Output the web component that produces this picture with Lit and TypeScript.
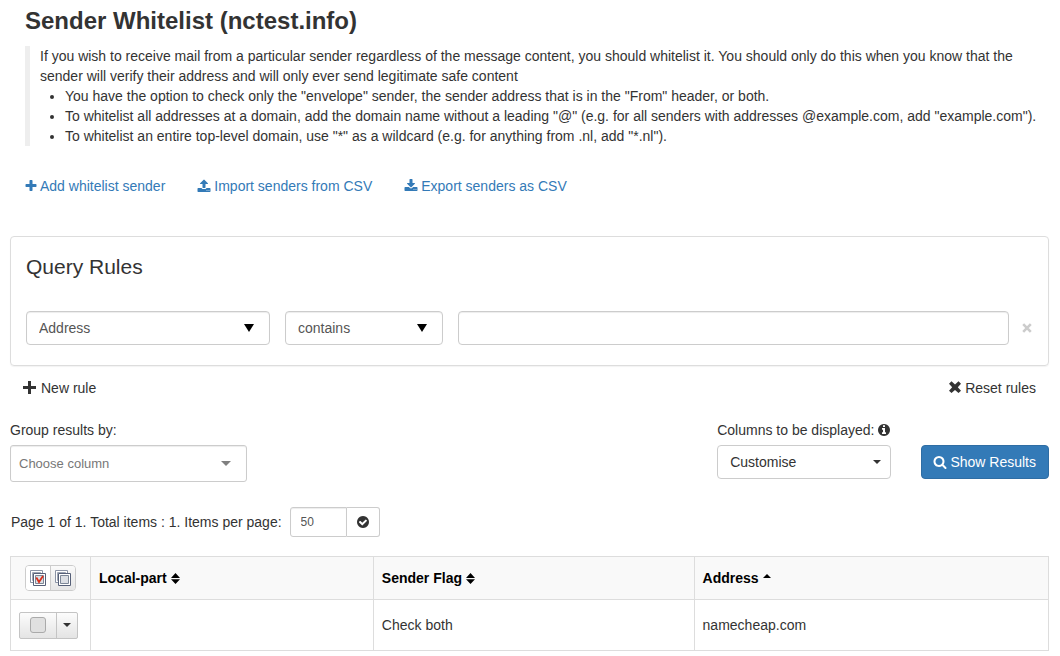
import { LitElement, html, svg, css } from "lit";
import { customElement, state } from "lit/decorators.js";

const ICONS = {
  plus: "M1600 736v192q0 40-28 68t-68 28h-416v416q0 40-28 68t-68 28h-192q-40 0-68-28t-28-68v-416h-416q-40 0-68-28t-28-68v-192q0-40 28-68t68-28h416v-416q0-40 28-68t68-28h192q40 0 68 28t28 68v416h416q40 0 68 28t28 68z",
  upload:
    "M1344 1472q0-26-19-45t-45-19-45 19-19 45 19 45 45 19 45-19 19-45zm256 0q0-26-19-45t-45-19-45 19-19 45 19 45 45 19 45-19 19-45zm128-224v320q0 40-28 68t-68 28h-1472q-40 0-68-28t-28-68v-320q0-40 28-68t68-28h427q21 56 70.5 92t110.5 36h256q61 0 110.5-36t70.5-92h427q40 0 68 28t28 68zm-325-648q-17 40-59 40h-256v448q0 26-19 45t-45 19h-256q-26 0-45-19t-19-45v-448h-256q-42 0-59-40-17-39 14-69l448-448q18-19 45-19t45 19l448 448q31 30 14 69z",
  download:
    "M1344 1344q0-26-19-45t-45-19-45 19-19 45 19 45 45 19 45-19 19-45zm256 0q0-26-19-45t-45-19-45 19-19 45 19 45 45 19 45-19 19-45zm128-224v320q0 40-28 68t-68 28h-1472q-40 0-68-28t-28-68v-320q0-40 28-68t68-28h465l135 136q58 56 136 56t136-56l136-136h464q40 0 68 28t28 68zm-325-569q17 41-14 70l-448 448q-18 19-45 19t-45-19l-448-448q-31-29-14-70 17-39 59-39h256v-448q0-26 19-45t45-19h256q26 0 45 19t19 45v448h256q42 0 59 39z",
  search:
    "M1216 832q0-185-131.5-316.5t-316.5-131.5-316.5 131.5-131.5 316.5 131.5 316.5 316.5 131.5 316.5-131.5 131.5-316.5zm512 832q0 52-38 90t-90 38q-54 0-90-38l-343-342q-179 124-399 124-143 0-273.5-55.5t-225-150-150-225-55.5-273.5 55.5-273.5 150-225 225-150 273.5-55.5 273.5 55.5 225 150 150 225 55.5 273.5q0 220-124 399l343 343q37 37 37 90z",
  info: "M1152 1376v-160q0-14-9-23t-23-9h-96v-512q0-14-9-23t-23-9h-320q-14 0-23 9t-9 23v160q0 14 9 23t23 9h96v320h-96q-14 0-23 9t-9 23v160q0 14 9 23t23 9h448q14 0 23-9t9-23zm-128-896v-160q0-14-9-23t-23-9h-192q-14 0-23 9t-9 23v160q0 14 9 23t23 9h192q14 0 23-9t9-23zm640 416q0 209-103 385.5t-279.5 279.5-385.5 103-385.5-103-279.5-279.5-103-385.5 103-385.5 279.5-279.5 385.5-103 385.5 103 279.5 279.5 103 385.5z",
  check:
    "M1412 734q0-28-18-46l-91-90q-19-19-45-19t-45 19l-408 407-226-226q-19-19-45-19t-45 19l-91 90q-18 18-18 46 0 27 18 45l362 362q19 19 45 19 27 0 46-19l543-543q18-18 18-45zm252 162q0 209-103 385.5t-279.5 279.5-385.5 103-385.5-103-279.5-279.5-103-385.5 103-385.5 279.5-279.5 385.5-103 385.5 103 279.5 279.5 103 385.5z",
};

type IconName = keyof typeof ICONS;

const icon = (name: IconName) => html`
  <svg class="icon" viewBox="0 0 1792 1792" aria-hidden="true"><path d=${ICONS[name]}></path></svg>
`;

const boldPlus = html`
  <svg class="glyph" viewBox="0 0 13 14" aria-hidden="true"><path d="M5 0h3v5h5v3H8v5H5V8H0V5h5z"></path></svg>
`;

const boldCross = html`
  <svg class="glyph" viewBox="0 0 13 14" aria-hidden="true">
    <path d="M3.500 .3l3.500 3.200L10.500 .3 13 2.700 9.800 6.200 13 9.700l-2.500 2.400L7 8.900l-3.500 3.200L1 9.700l3.200-3.500L1 2.700z"></path>
  </svg>
`;

const cross = html`
  <svg class="cross" viewBox="0 0 12 12" aria-hidden="true">
    <path d="M2.200 2.200l7.600 7.600M9.800 2.200L2.200 9.800"></path>
  </svg>
`;

const sortBoth = html`
  <svg class="sort-both" viewBox="0 0 9 11" aria-hidden="true"><path d="M4.500 0L9 5H0zM0 6.200h9l-4.500 4.800z"></path></svg>
`;

const sortUp = html`
  <svg class="sort-up" viewBox="0 0 8 4" aria-hidden="true"><path d="M0 4L4 0l4 4z"></path></svg>
`;

const arrow = (kind: string) => html`
  <svg class="arrow ${kind}" viewBox="0 0 10 8" preserveAspectRatio="none" aria-hidden="true">
    <path d="M0 0h10L5 8z"></path>
  </svg>
`;

const stack = (checked: boolean) => html`
  <svg class="stack" viewBox="0 0 16 16" aria-hidden="true">
    <path d="M.5 .5h12v12H.5z" fill="#fff" stroke="#8a93a5"></path>
    <path d="M2.500 2.500h8v8h-8z" fill="#d5d8de" stroke="#a0a7b5"></path>
    <path d="M3.500 3.500h12v12h-12z" fill="#fff" stroke="#566078"></path>
    <path d="M5.500 5.500h8v8h-8z" fill="#dcdfe4" stroke="#7d8797"></path>
    ${checked
      ? svg`<path d="M6.300 7.500l2.700 4.500 4-6" fill="none" stroke="#d9301c" stroke-width="1.800"></path>`
      : null}
  </svg>
`;

@customElement("app-root")
export class AppRoot extends LitElement {
  @state() private rows = [{ local: "", flag: "Check both", address: "namecheap.com" }];

  static styles = css`
    :host {
      display: block;
      padding: 7px 11px 5px 10px;
      background: #fff;
      color: #333;
      font: 14px/20px "Liberation Sans", Arial, sans-serif;
    }
    * {
      box-sizing: border-box;
    }
    button,
    input,
    select {
      margin: 0;
      font: inherit;
      color: inherit;
    }
    button {
      padding: 0;
      border: 0;
      background: none;
      cursor: pointer;
    }
    svg {
      flex: none;
      display: block;
    }
    .icon {
      width: 14px;
      height: 14px;
      fill: currentColor;
    }
    .glyph {
      width: 13px;
      height: 14px;
      fill: currentColor;
    }
    .cross {
      width: 12px;
      height: 12px;
      stroke: currentColor;
      stroke-width: 2.6;
    }
    .intro {
      padding: 0 0 0 15px;
    }
    h1 {
      margin: 0 0 11px;
      font-size: 24px;
      line-height: 28px;
    }
    .note {
      margin: 0;
      padding-left: 10px;
      border-left: 5px solid #eee;
    }
    .note p {
      margin: 0;
    }
    .note ul {
      margin: 0;
      padding-left: 25px;
    }
    .links {
      display: flex;
      gap: 32px;
      margin: 30px 0 40px;
    }
    .links a {
      display: flex;
      align-items: center;
      gap: 3px;
      color: #337ab7;
      text-decoration: none;
    }
    .links a.add {
      gap: 4px;
    }
    .narrow {
      width: 11px;
      display: flex;
      justify-content: center;
    }
    .card {
      padding: 18px 15px 20px;
      border: 1px solid #ddd;
      border-radius: 4px;
      box-shadow: 0 1px 1px rgba(0, 0, 0, 0.05);
    }
    h2 {
      margin: 0 0 32px;
      font-size: 21px;
      line-height: 24px;
      font-weight: 400;
    }
    .rule {
      display: flex;
      align-items: center;
      gap: 12px;
    }
    .fields {
      flex: 1;
      display: grid;
      grid-template-columns: 244px 158px 1fr;
      gap: 15px;
    }
    .picker {
      display: grid;
      align-items: center;
    }
    .picker > * {
      grid-area: 1 / 1;
    }
    .control {
      appearance: none;
      width: 100%;
      height: 34px;
      padding: 0 12px;
      border: 1px solid #ccc;
      border-radius: 4px;
      background: #fff;
      color: #555;
      box-shadow: inset 0 1px 1px rgba(0, 0, 0, 0.075);
    }
    .arrow {
      justify-self: end;
      pointer-events: none;
    }
    .arrow.solid {
      width: 10px;
      height: 8px;
      margin-right: 16px;
      fill: #000;
    }
    .arrow.wide {
      width: 10px;
      height: 5px;
      margin-right: 16px;
      fill: #808080;
    }
    .arrow.caret {
      width: 8px;
      height: 4px;
      margin-right: 10px;
      fill: #333;
    }
    .remove {
      color: #ccc;
    }
    .rule-actions {
      display: flex;
      justify-content: space-between;
      padding: 12px 13px 22px;
    }
    .rule-actions button {
      display: flex;
      align-items: center;
      gap: 5px;
    }
    .rule-actions .reset {
      gap: 4px;
    }
    .options {
      display: flex;
      align-items: flex-start;
      justify-content: space-between;
    }
    .options label {
      display: flex;
      align-items: center;
      gap: 3px;
      margin-bottom: 5px;
    }
    .group {
      width: 237px;
    }
    .group .control {
      height: 37px;
      padding: 0 8px;
      border-radius: 3px;
      font-size: 13px;
      color: #777;
    }
    .right {
      display: flex;
      align-items: flex-end;
      gap: 30px;
    }
    .columns .control {
      color: #333;
      box-shadow: none;
    }
    .primary {
      display: flex;
      align-items: center;
      gap: 3px;
      height: 34px;
      padding: 0 12px 0 11px;
      border: 1px solid #2e6da4;
      border-radius: 4px;
      background: #337ab7;
      color: #fff;
    }
    .paging {
      display: flex;
      align-items: center;
      margin: 25px 0 19px;
      padding-left: 1px;
      gap: 8px;
    }
    .per-page {
      display: flex;
    }
    .per-page input {
      width: 57px;
      height: 30px;
      padding: 0 10px;
      border: 1px solid #ccc;
      border-radius: 3px 0 0 3px;
      font-size: 12px;
      color: #555;
      box-shadow: inset 0 1px 1px rgba(0, 0, 0, 0.075);
    }
    .per-page button {
      display: flex;
      align-items: center;
      justify-content: center;
      width: 33px;
      border: 1px solid #ccc;
      border-left: 0;
      border-radius: 0 3px 3px 0;
    }
    table {
      width: 100%;
      table-layout: fixed;
      border-collapse: collapse;
    }
    th,
    td {
      padding: 8px;
      border: 1px solid #ddd;
      text-align: left;
      vertical-align: middle;
    }
    th {
      height: 43px;
      background: #f9f9f9;
      color: #000;
    }
    td {
      height: 51px;
    }
    .col-select {
      width: 80px;
    }
    .col-local {
      width: 27.25%;
    }
    .col-flag {
      width: 30.9%;
    }
    .sort {
      display: flex;
      align-items: center;
      gap: 4px;
      font-weight: 700;
    }
    .sort-both {
      width: 9px;
      height: 11px;
      fill: #000;
    }
    .sort-up {
      width: 8px;
      height: 4px;
      margin-bottom: 5px;
      fill: #000;
    }
    th.tools,
    td.tools {
      padding: 0 8px;
    }
    .bulk {
      display: flex;
      width: 51px;
      height: 26px;
      margin: 0 auto;
      border: 1px solid #ccc;
      border-radius: 4px;
      overflow: hidden;
    }
    .bulk button {
      flex: 1;
      display: flex;
      align-items: center;
      justify-content: center;
      background: #fff;
    }
    .bulk button + button {
      border-left: 1px solid #ccc;
      background: linear-gradient(#fafafa, #e6e6e6);
    }
    .stack {
      width: 16px;
      height: 16px;
    }
    .row-menu {
      display: flex;
      width: 59px;
      height: 27px;
      border: 1px solid #c4c4c4;
      border-radius: 2px;
      background: linear-gradient(#fcfcfc, #e4e4e4);
    }
    .row-menu label {
      flex: 1;
      display: flex;
      align-items: center;
      justify-content: center;
    }
    .row-menu input {
      appearance: none;
      width: 16px;
      height: 16px;
      border: 1px solid #aaa;
      border-radius: 3px;
      background: #e0e0e0;
    }
    .row-menu button {
      display: flex;
      align-items: center;
      justify-content: center;
      width: 21px;
      border-left: 1px solid #c4c4c4;
    }
    .row-menu .arrow {
      margin: 0;
    }
  `;

  render() {
    return html`
      <header class="intro">
        <h1>Sender Whitelist (nctest.info)</h1>
        <blockquote class="note">
          <p>
            If you wish to receive mail from a particular sender regardless of the message content, you should
            whitelist it. You should only do this when you know that the sender will verify their address and will
            only ever send legitimate safe content
          </p>
          <ul>
            <li>
              You have the option to check only the "envelope" sender, the sender address that is in the "From"
              header, or both.
            </li>
            <li>
              To whitelist all addresses at a domain, add the domain name without a leading "@" (e.g. for all
              senders with addresses @example.com, add "example.com").
            </li>
            <li>
              To whitelist an entire top-level domain, use "*" as a wildcard (e.g. for anything from .nl, add
              "*.nl").
            </li>
          </ul>
        </blockquote>
        <nav class="links">
          <a class="add" href="#add"><span class="narrow">${icon("plus")}</span>Add whitelist sender</a>
          <a href="#import">${icon("upload")}Import senders from CSV</a>
          <a href="#export">${icon("download")}Export senders as CSV</a>
        </nav>
      </header>

      <section class="card">
        <h2>Query Rules</h2>
        <div class="rule">
          <div class="fields">
            <div class="picker">
              <select class="control" aria-label="Field">
                <option>Address</option>
                <option>Local-part</option>
                <option>Sender Flag</option>
              </select>
              ${arrow("solid")}
            </div>
            <div class="picker">
              <select class="control" aria-label="Condition">
                <option>contains</option>
                <option>equals</option>
              </select>
              ${arrow("solid")}
            </div>
            <input class="control" type="text" aria-label="Value" />
          </div>
          <button class="remove" aria-label="Remove rule">${cross}</button>
        </div>
      </section>

      <div class="rule-actions">
        <button>${boldPlus}New rule</button>
        <button class="reset">${boldCross}Reset rules</button>
      </div>

      <section class="options">
        <div class="group">
          <label for="group">Group results by:</label>
          <div class="picker">
            <select class="control" id="group">
              <option>Choose column</option>
            </select>
            ${arrow("wide")}
          </div>
        </div>
        <div class="right">
          <div class="columns">
            <label for="columns">Columns to be displayed: ${icon("info")}</label>
            <div class="picker">
              <select class="control" id="columns">
                <option>Customise</option>
              </select>
              ${arrow("caret")}
            </div>
          </div>
          <button class="primary">${icon("search")}Show Results</button>
        </div>
      </section>

      <div class="paging">
        <label for="per-page">Page 1 of 1. Total items : 1. Items per page:</label>
        <div class="per-page">
          <input id="per-page" type="text" value="50" />
          <button aria-label="Apply">${icon("check")}</button>
        </div>
      </div>

      <table>
        <colgroup>
          <col class="col-select" />
          <col class="col-local" />
          <col class="col-flag" />
          <col />
        </colgroup>
        <thead>
          <tr>
            <th class="tools">
              <div class="bulk">
                <button aria-label="Select all">${stack(true)}</button>
                <button aria-label="Select none">${stack(false)}</button>
              </div>
            </th>
            <th><button class="sort">Local-part${sortBoth}</button></th>
            <th><button class="sort">Sender Flag${sortBoth}</button></th>
            <th><button class="sort">Address${sortUp}</button></th>
          </tr>
        </thead>
        <tbody>
          ${this.rows.map(
            (row) => html`
              <tr>
                <td class="tools">
                  <div class="row-menu">
                    <label><input type="checkbox" aria-label="Select row" /></label>
                    <button aria-label="Row actions">${arrow("caret")}</button>
                  </div>
                </td>
                <td>${row.local}</td>
                <td>${row.flag}</td>
                <td>${row.address}</td>
              </tr>
            `
          )}
        </tbody>
      </table>
    `;
  }
}
